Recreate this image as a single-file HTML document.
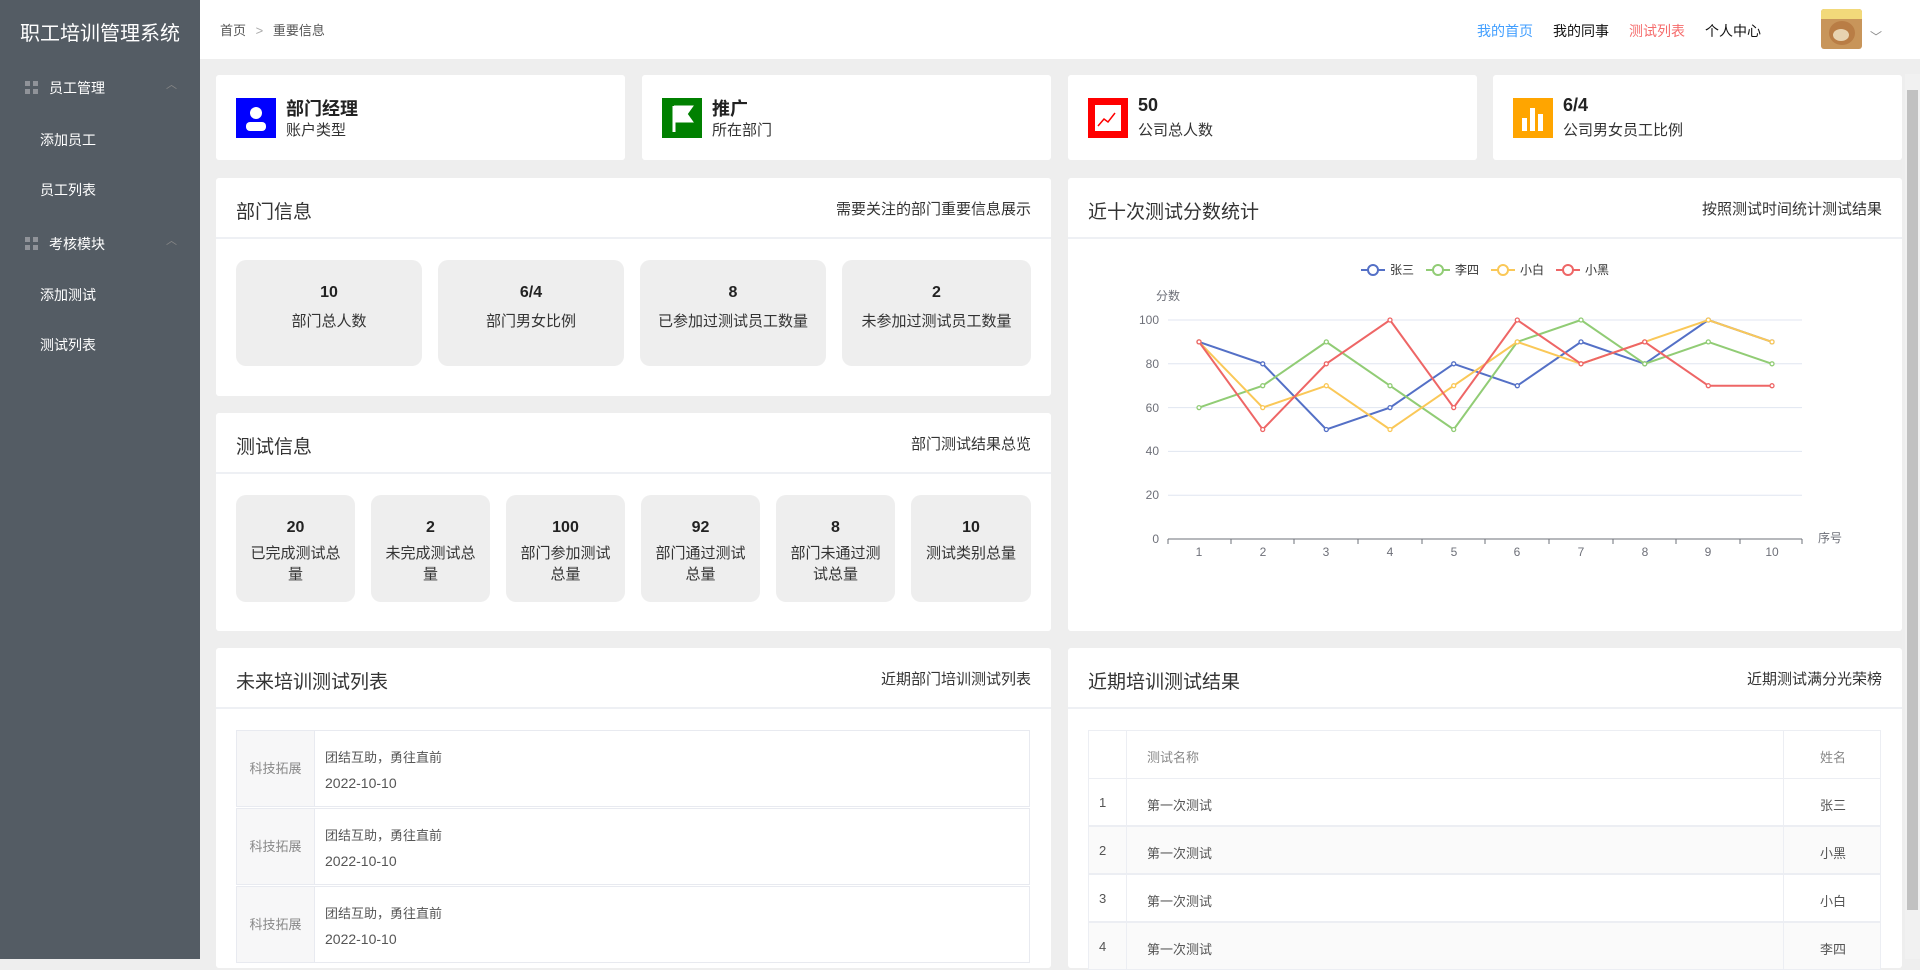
<!DOCTYPE html>
<html><head><meta charset="utf-8"><style>
*{margin:0;padding:0;box-sizing:border-box}
body{width:1920px;height:959px;overflow:hidden;background:#eee;font-family:"Liberation Sans","Noto Sans CJK SC",sans-serif;color:#333;position:relative}
.a{position:absolute}
.side{left:0;top:0;width:200px;height:959px;background:#545c64;color:#fff}
.side .t{position:absolute;left:0;width:200px;top:17px;text-align:center;font-size:20px}
.side .m{position:absolute;font-size:14px}
.grid{position:absolute;left:25px;width:13px;height:13px}
.grid i{position:absolute;width:5px;height:5px;background:#909399}
.hdr{left:200px;top:0;width:1720px;height:59px;background:#fff}
.card{background:#fff;border-radius:3px;position:absolute}
.ico{position:absolute;left:20px;top:23px;width:40px;height:40px}
.cv{position:absolute;left:70px;top:20px;font-size:18px;font-weight:bold;color:#222}
.cl{position:absolute;left:70px;top:44px;font-size:15px;color:#333}
.ph{position:absolute;left:0;right:0;top:0;height:61px;border-bottom:2px solid #eef0f4}
.ph .l{position:absolute;left:20px;top:19px;font-size:19px;color:#333}
.ph .r{position:absolute;right:20px;top:20px;font-size:15px;color:#333}
.box{position:absolute;background:#eee;border-radius:10px;text-align:center;font-size:15px;color:#333}
.box b{display:block;font-size:16px;color:#222}
.row{position:absolute;left:20px;width:794px;height:77px;border:1px solid #e8eaf0}
.row .lb{position:absolute;left:0;top:0;bottom:0;width:78px;background:#f7f7f8;border-right:1px solid #e8eaf0;color:#888;font-size:13px;text-align:center;line-height:75px}
.row .t1{position:absolute;left:88px;top:16px;font-size:13px;color:#555}
.row .t2{position:absolute;left:88px;top:44px;font-size:14px;color:#555}
.tr{position:absolute;left:20px;width:793px;height:48px;border:1px solid #eceef3;font-size:13px;color:#555}
.tr span{position:absolute;top:16px}
</style></head><body>
<div class="a side">
<div class="t">职工培训管理系统</div>
<div class="grid" style="top:81px"><i style="left:0;top:0"></i><i style="left:8px;top:0"></i><i style="left:0;top:8px"></i><i style="left:8px;top:8px"></i></div>
<div class="m" style="left:49px;top:78px">员工管理</div><div class="m" style="left:166px;top:76px;color:#888;font-size:11px">︿</div>
<div class="m" style="left:40px;top:130px">添加员工</div>
<div class="m" style="left:40px;top:180px">员工列表</div>
<div class="grid" style="top:237px"><i style="left:0;top:0"></i><i style="left:8px;top:0"></i><i style="left:0;top:8px"></i><i style="left:8px;top:8px"></i></div>
<div class="m" style="left:49px;top:234px">考核模块</div><div class="m" style="left:166px;top:232px;color:#888;font-size:11px">︿</div>
<div class="m" style="left:40px;top:285px">添加测试</div>
<div class="m" style="left:40px;top:335px">测试列表</div>
</div>
<div class="a hdr">
<div class="a" style="left:20px;top:20px;font-size:13px;color:#555">首页 <span style="color:#aaa;margin:0 6px">&gt;</span> 重要信息</div>
<div class="a" style="left:1277px;top:21px;font-size:14px;color:#409eff">我的首页</div>
<div class="a" style="left:1353px;top:21px;font-size:14px;color:#111">我的同事</div>
<div class="a" style="left:1429px;top:21px;font-size:14px;color:#f56c6c">测试列表</div>
<div class="a" style="left:1505px;top:21px;font-size:14px;color:#111">个人中心</div>
<div class="a" style="left:1621px;top:9px;width:41px;height:40px;background:#c8955a;border-radius:3px;overflow:hidden"><div class="a" style="left:0;top:0;width:41px;height:10px;background:#f2d97a"></div><div class="a" style="left:8px;top:12px;width:26px;height:24px;border-radius:50%;background:#b97d45"></div><div class="a" style="left:12px;top:20px;width:16px;height:12px;border-radius:50%;background:#e8d3b0"></div></div>
<div class="a" style="left:1670px;top:28px;font-size:12px;color:#888">﹀</div>
</div>
<div class="a" style="left:1905px;top:74px;width:15px;height:885px;background:#f1f1f1"><div class="a" style="left:2px;top:16px;width:11px;height:820px;background:#c1c1c1"></div></div>

<div class="card" style="left:216px;top:75px;width:409px;height:85px"><div class="ico" style="background:#0000ff"><svg width="40" height="40"><circle cx="20" cy="15" r="6" fill="#fff"/><rect x="10" y="24" width="20" height="9" rx="4" fill="#fff"/></svg></div><div class="cv">部门经理</div><div class="cl">账户类型</div></div>
<div class="card" style="left:642px;top:75px;width:409px;height:85px"><div class="ico" style="background:#008000"><svg width="40" height="40"><path d="M12 8v26M12 9h17l-5 7 5 7H12" fill="#fff" stroke="#fff" stroke-width="3"/></svg></div><div class="cv">推广</div><div class="cl">所在部门</div></div>
<div class="card" style="left:1068px;top:75px;width:409px;height:85px"><div class="ico" style="background:#ff0000"><svg width="40" height="40"><rect x="7" y="7" width="26" height="26" fill="#fff"/><path d="M10 28l6-7 4 3 7-9" stroke="#f00" stroke-width="1.5" fill="none"/></svg></div><div class="cv">50</div><div class="cl">公司总人数</div></div>
<div class="card" style="left:1493px;top:75px;width:409px;height:85px"><div class="ico" style="background:#ffa500"><svg width="40" height="40"><rect x="9" y="20" width="5" height="13" fill="#fff"/><rect x="17" y="10" width="5" height="23" fill="#fff"/><rect x="25" y="16" width="5" height="17" fill="#fff"/></svg></div><div class="cv">6/4</div><div class="cl">公司男女员工比例</div></div>

<div class="card" style="left:216px;top:178px;width:835px;height:218px"><div class="ph"><div class="l">部门信息</div><div class="r">需要关注的部门重要信息展示</div></div>
<div class="box" style="left:20px;top:82px;width:186px;height:106px;padding-top:24px"><b>10</b><div style="margin-top:8px">部门总人数</div></div>
<div class="box" style="left:222px;top:82px;width:186px;height:106px;padding-top:24px"><b>6/4</b><div style="margin-top:8px">部门男女比例</div></div>
<div class="box" style="left:424px;top:82px;width:186px;height:106px;padding-top:24px"><b>8</b><div style="margin-top:8px">已参加过测试员工数量</div></div>
<div class="box" style="left:626px;top:82px;width:189px;height:106px;padding-top:24px"><b>2</b><div style="margin-top:8px">未参加过测试员工数量</div></div>
</div>

<div class="card" style="left:216px;top:413px;width:835px;height:218px"><div class="ph"><div class="l">测试信息</div><div class="r">部门测试结果总览</div></div>
<div class="box" style="left:20px;top:82px;width:119px;height:107px;padding:24px 8px 0"><b>20</b><div style="margin-top:6px;line-height:21px">已完成测试总量</div></div>
<div class="box" style="left:155px;top:82px;width:119px;height:107px;padding:24px 8px 0"><b>2</b><div style="margin-top:6px;line-height:21px">未完成测试总量</div></div>
<div class="box" style="left:290px;top:82px;width:119px;height:107px;padding:24px 8px 0"><b>100</b><div style="margin-top:6px;line-height:21px">部门参加测试总量</div></div>
<div class="box" style="left:425px;top:82px;width:119px;height:107px;padding:24px 8px 0"><b>92</b><div style="margin-top:6px;line-height:21px">部门通过测试总量</div></div>
<div class="box" style="left:560px;top:82px;width:119px;height:107px;padding:24px 8px 0"><b>8</b><div style="margin-top:6px;line-height:21px">部门未通过测试总量</div></div>
<div class="box" style="left:695px;top:82px;width:120px;height:107px;padding:24px 8px 0"><b>10</b><div style="margin-top:6px;line-height:21px">测试类别总量</div></div>
</div>

<div class="card" style="left:1068px;top:178px;width:834px;height:453px"><div class="ph"><div class="l">近十次测试分数统计</div><div class="r">按照测试时间统计测试结果</div></div></div>
<svg class="a" style="left:1068px;top:178px" width="834" height="453" viewBox="1068 178 834 453" font-family="Liberation Sans,Noto Sans CJK SC,sans-serif">
<defs>
<marker id="mb" markerWidth="6" markerHeight="6" refX="3" refY="3" markerUnits="userSpaceOnUse"><circle cx="3" cy="3" r="2" fill="#fff" stroke="#5470c6" stroke-width="1.3"/></marker>
<marker id="mg" markerWidth="6" markerHeight="6" refX="3" refY="3" markerUnits="userSpaceOnUse"><circle cx="3" cy="3" r="2" fill="#fff" stroke="#91cc75" stroke-width="1.3"/></marker>
<marker id="my" markerWidth="6" markerHeight="6" refX="3" refY="3" markerUnits="userSpaceOnUse"><circle cx="3" cy="3" r="2" fill="#fff" stroke="#fac858" stroke-width="1.3"/></marker>
<marker id="mr" markerWidth="6" markerHeight="6" refX="3" refY="3" markerUnits="userSpaceOnUse"><circle cx="3" cy="3" r="2" fill="#fff" stroke="#ee6666" stroke-width="1.3"/></marker>
</defs>
<g stroke="#e0e6f1" stroke-width="1"><line x1="1168" x2="1802" y1="320" y2="320"/><line x1="1168" x2="1802" y1="363.8" y2="363.8"/><line x1="1168" x2="1802" y1="407.6" y2="407.6"/><line x1="1168" x2="1802" y1="451.4" y2="451.4"/><line x1="1168" x2="1802" y1="495.2" y2="495.2"/></g>
<line x1="1168" x2="1802" y1="539" y2="539" stroke="#6e7079"/>
<g stroke="#6e7079"><line x1="1168" x2="1168" y1="539" y2="544"/><line x1="1231" x2="1231" y1="539" y2="544"/><line x1="1294" x2="1294" y1="539" y2="544"/><line x1="1358" x2="1358" y1="539" y2="544"/><line x1="1422" x2="1422" y1="539" y2="544"/><line x1="1485" x2="1485" y1="539" y2="544"/><line x1="1549" x2="1549" y1="539" y2="544"/><line x1="1613" x2="1613" y1="539" y2="544"/><line x1="1676" x2="1676" y1="539" y2="544"/><line x1="1740" x2="1740" y1="539" y2="544"/><line x1="1802" x2="1802" y1="539" y2="544"/></g>
<g font-size="12" fill="#6e7079" text-anchor="end"><text x="1159" y="324">100</text><text x="1159" y="368">80</text><text x="1159" y="412">60</text><text x="1159" y="455">40</text><text x="1159" y="499">20</text><text x="1159" y="543">0</text></g>
<text x="1156" y="300" font-size="12" fill="#6e7079">分数</text>
<text x="1818" y="542" font-size="12" fill="#6e7079">序号</text>
<g font-size="12" fill="#6e7079" text-anchor="middle"><text x="1199" y="556">1</text><text x="1263" y="556">2</text><text x="1326" y="556">3</text><text x="1390" y="556">4</text><text x="1454" y="556">5</text><text x="1517" y="556">6</text><text x="1581" y="556">7</text><text x="1645" y="556">8</text><text x="1708" y="556">9</text><text x="1772" y="556">10</text></g>
<g fill="none" stroke-width="2">
<polyline stroke="#5470c6" marker-start="url(#mb)" marker-mid="url(#mb)" marker-end="url(#mb)" points="1199,341.9 1262.7,363.8 1326.3,429.5 1390,407.6 1453.7,363.8 1517.3,385.7 1581,341.9 1644.7,363.8 1708.3,320 1772,341.9"/>
<polyline stroke="#91cc75" marker-start="url(#mg)" marker-mid="url(#mg)" marker-end="url(#mg)" points="1199,407.6 1262.7,385.7 1326.3,341.9 1390,385.7 1453.7,429.5 1517.3,341.9 1581,320 1644.7,363.8 1708.3,341.9 1772,363.8"/>
<polyline stroke="#fac858" marker-start="url(#my)" marker-mid="url(#my)" marker-end="url(#my)" points="1199,341.9 1262.7,407.6 1326.3,385.7 1390,429.5 1453.7,385.7 1517.3,341.9 1581,363.8 1644.7,341.9 1708.3,320 1772,341.9"/>
<polyline stroke="#ee6666" marker-start="url(#mr)" marker-mid="url(#mr)" marker-end="url(#mr)" points="1199,341.9 1262.7,429.5 1326.3,363.8 1390,320 1453.7,407.6 1517.3,320 1581,363.8 1644.7,341.9 1708.3,385.7 1772,385.7"/>
</g>
<g stroke-width="2" fill="#fff" font-size="12">
<line x1="1361" x2="1385" y1="270" y2="270" stroke="#5470c6"/><circle cx="1373" cy="270" r="5" stroke="#5470c6"/><text x="1390" y="274" fill="#333" stroke="none">张三</text>
<line x1="1426" x2="1450" y1="270" y2="270" stroke="#91cc75"/><circle cx="1438" cy="270" r="5" stroke="#91cc75"/><text x="1455" y="274" fill="#333" stroke="none">李四</text>
<line x1="1491" x2="1515" y1="270" y2="270" stroke="#fac858"/><circle cx="1503" cy="270" r="5" stroke="#fac858"/><text x="1520" y="274" fill="#333" stroke="none">小白</text>
<line x1="1556" x2="1580" y1="270" y2="270" stroke="#ee6666"/><circle cx="1568" cy="270" r="5" stroke="#ee6666"/><text x="1585" y="274" fill="#333" stroke="none">小黑</text>
</g>
</svg>

<div class="card" style="left:216px;top:648px;width:835px;height:320px"><div class="ph"><div class="l">未来培训测试列表</div><div class="r">近期部门培训测试列表</div></div>
<div class="row" style="top:82px"><div class="lb">科技拓展</div><div class="t1">团结互助，勇往直前</div><div class="t2">2022-10-10</div></div>
<div class="row" style="top:160px"><div class="lb">科技拓展</div><div class="t1">团结互助，勇往直前</div><div class="t2">2022-10-10</div></div>
<div class="row" style="top:238px"><div class="lb">科技拓展</div><div class="t1">团结互助，勇往直前</div><div class="t2">2022-10-10</div></div>
</div>

<div class="card" style="left:1068px;top:648px;width:834px;height:320px"><div class="ph"><div class="l">近期培训测试结果</div><div class="r">近期测试满分光荣榜</div></div>
<div class="tr" style="top:82px;height:49px;color:#888"><span style="left:58px">测试名称</span><span style="left:731px">姓名</span></div>
<div class="tr" style="top:130px"><span style="left:10px">1</span><span style="left:58px">第一次测试</span><span style="left:731px">张三</span></div>
<div class="tr" style="top:178px;background:#fafafa"><span style="left:10px">2</span><span style="left:58px">第一次测试</span><span style="left:731px">小黑</span></div>
<div class="tr" style="top:226px"><span style="left:10px">3</span><span style="left:58px">第一次测试</span><span style="left:731px">小白</span></div>
<div class="tr" style="top:274px;background:#fafafa"><span style="left:10px">4</span><span style="left:58px">第一次测试</span><span style="left:731px">李四</span></div>
<div class="a" style="left:58px;top:82px;width:1px;height:240px;background:#eceef3"></div>
<div class="a" style="left:715px;top:82px;width:1px;height:240px;background:#eceef3"></div>
</div>
</body></html>
